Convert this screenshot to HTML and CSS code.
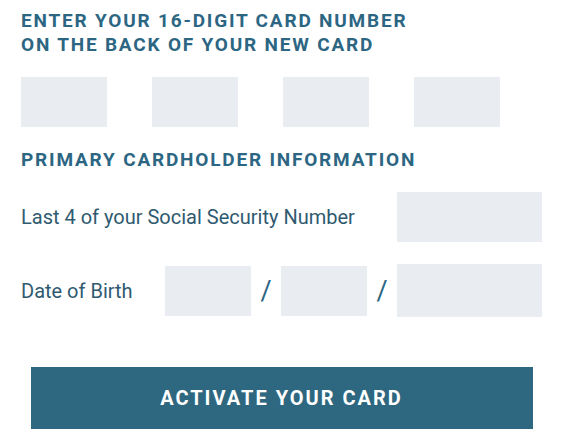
FILE: index.html
```html
<!doctype html>
<html lang="en">
<head>
  <meta charset="utf-8">
  <title>Activate your card</title>
  <meta name="viewport" content="width=device-width, initial-scale=1">
  <link rel="stylesheet" href="styles.css">
</head>
<body>
  <form class="activate">
    <!-- Card number -->
    <h2 class="section-title">Enter your 16-digit card number<br>on the back of your new card</h2>
    <div class="card-row">
      <input class="box box-card" type="text" maxlength="4" aria-label="Card digits 1-4">
      <input class="box box-card" type="text" maxlength="4" aria-label="Card digits 5-8">
      <input class="box box-card" type="text" maxlength="4" aria-label="Card digits 9-12">
      <input class="box box-card" type="text" maxlength="4" aria-label="Card digits 13-16">
    </div>

    <!-- Cardholder -->
    <h2 class="section-title section-title-2">Primary cardholder information</h2>
    <div class="field-row">
      <label class="field-label" for="ssn">Last 4 of your Social Security Number</label>
      <input class="box box-wide" id="ssn" type="text" maxlength="4">
    </div>
    <div class="field-row dob-row">
      <label class="field-label dob-label" for="dobM">Date of Birth</label>
      <input class="box box-card" id="dobM" type="text" maxlength="2">
      <span class="slash">/</span>
      <input class="box box-card" type="text" maxlength="2" aria-label="Day">
      <span class="slash">/</span>
      <input class="box box-wide box-year" type="text" maxlength="4" aria-label="Year">
    </div>

    <div class="actions">
      <button class="btn" type="submit">Activate your card</button>
    </div>
  </form>
</body>
</html>
```

FILE: styles.css
```css
:root{
  --brand:#2d6780; --title:#2c6683; --text:#2f5a70; --field:#e9ecf0;
}
*{ box-sizing:border-box }
body{ margin:0; background:#fff; font-family:Roboto,"Liberation Sans",Arial,sans-serif; color:var(--text); }

.activate{ width:521px; margin:0 0 0 21px; padding-top:9px; }

.section-title{ margin:0; font-size:19px; line-height:24px; font-weight:700; letter-spacing:1.8px; text-transform:uppercase; color:var(--title); }
.section-title-2{ margin-top:21px; }

.box{ display:block; height:50px; border:0; border-radius:0; background:var(--field); padding:0 10px; font:inherit; font-size:18px; color:var(--text); outline:none; }
.box-card{ width:86px; }
.box-wide{ width:145px; }
.box-year{ height:53px; }

.card-row{ display:flex; gap:45px; margin-top:20px; }

.field-row{ display:flex; align-items:center; justify-content:space-between; margin-top:20px; }
.field-label{ font-size:20px; color:var(--text); }
.dob-row{ justify-content:flex-start; margin-top:22px; }
.dob-label{ width:144px; }
.slash{ width:30px; text-align:center; font-size:27px; color:var(--title); }

.actions{ display:flex; justify-content:center; margin-top:50px; }
.btn{ appearance:none; border:0; cursor:pointer; width:502px; height:62px; background:var(--brand); color:#fff; font:inherit; font-size:20px; font-weight:700; letter-spacing:2px; text-transform:uppercase; }
```
